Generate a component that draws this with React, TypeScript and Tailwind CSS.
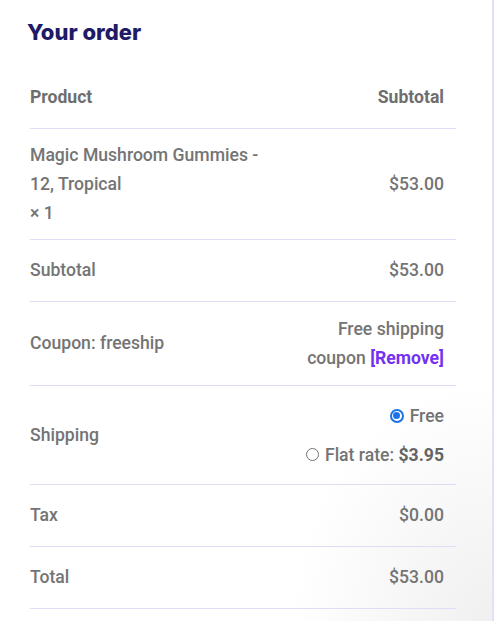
import React from "react";

const ROBOTO = { fontFamily: "Roboto, 'Liberation Sans', sans-serif" };

function Row({
  label,
  children,
  h,
}: {
  label: React.ReactNode;
  children?: React.ReactNode;
  h: string;
}) {
  return (
    <div className={`flex items-center justify-between border-b border-[#dedcf6] pr-3 ${h}`}>
      <div>{label}</div>
      <div className="text-right">{children}</div>
    </div>
  );
}

export default function App() {
  return (
    <div className="flex h-[621px] w-[500px] bg-white">
      <div className="relative h-full w-[492px] bg-[radial-gradient(ellipse_200px_240px_at_100%_100%,#f0f0f0,#ffffff)]">
        <h2
          className="pl-[27px] pt-[18px] text-[22px] font-extrabold leading-[28px] text-[#201b66]"
          style={{ fontFamily: "Inter, 'DejaVu Sans', sans-serif" }}
        >
          Your order
        </h2>

        <div
          className="ml-[30px] mt-[21px] w-[426px] text-[17.6px] font-medium text-[#747474]"
          style={ROBOTO}
        >
          <div className="flex h-[62px] items-center justify-between border-b border-[#dedcf6] pr-3 font-bold text-[#6e6e6e]">
            <span>Product</span>
            <span>Subtotal</span>
          </div>

          <div className="flex h-[111px] items-center justify-between border-b border-[#dedcf6] pr-3">
            <div className="w-[250px] leading-[29px]">
              Magic Mushroom Gummies - 12, Tropical
              <br />× 1
            </div>
            <div>$53.00</div>
          </div>

          <Row label="Subtotal" h="h-[62px]">
            $53.00
          </Row>

          <Row label="Coupon: freeship" h="h-[84px]">
            <div className="leading-[29px]">
              Free shipping
              <br />
              coupon{" "}
              <a href="#" className="font-bold text-[#7431f2]">
                [Remove]
              </a>
            </div>
          </Row>

          <Row label="Shipping" h="h-[99px]">
            <div className="flex flex-col items-end gap-[15px]">
              <label className="flex items-center gap-[6px] leading-[24px]">
                <span className="flex h-[14px] w-[14px] items-center justify-center rounded-full border-2 border-[#1a73e8]">
                  <span className="h-[7px] w-[7px] rounded-full bg-[#1a73e8]" />
                </span>
                Free
              </label>
              <label className="flex items-center gap-[6px] leading-[24px]">
                <span className="h-[13px] w-[13px] rounded-full border border-[#767676] bg-white" />
                <span>
                  Flat rate: <span className="font-bold text-[#646464]">$3.95</span>
                </span>
              </label>
            </div>
          </Row>

          <Row label="Tax" h="h-[62px]">
            $0.00
          </Row>

          <Row label="Total" h="h-[62px]">
            $53.00
          </Row>
        </div>
      </div>
      <div className="h-full w-[2px] bg-[#e2e0f8]" />
    </div>
  );
}
